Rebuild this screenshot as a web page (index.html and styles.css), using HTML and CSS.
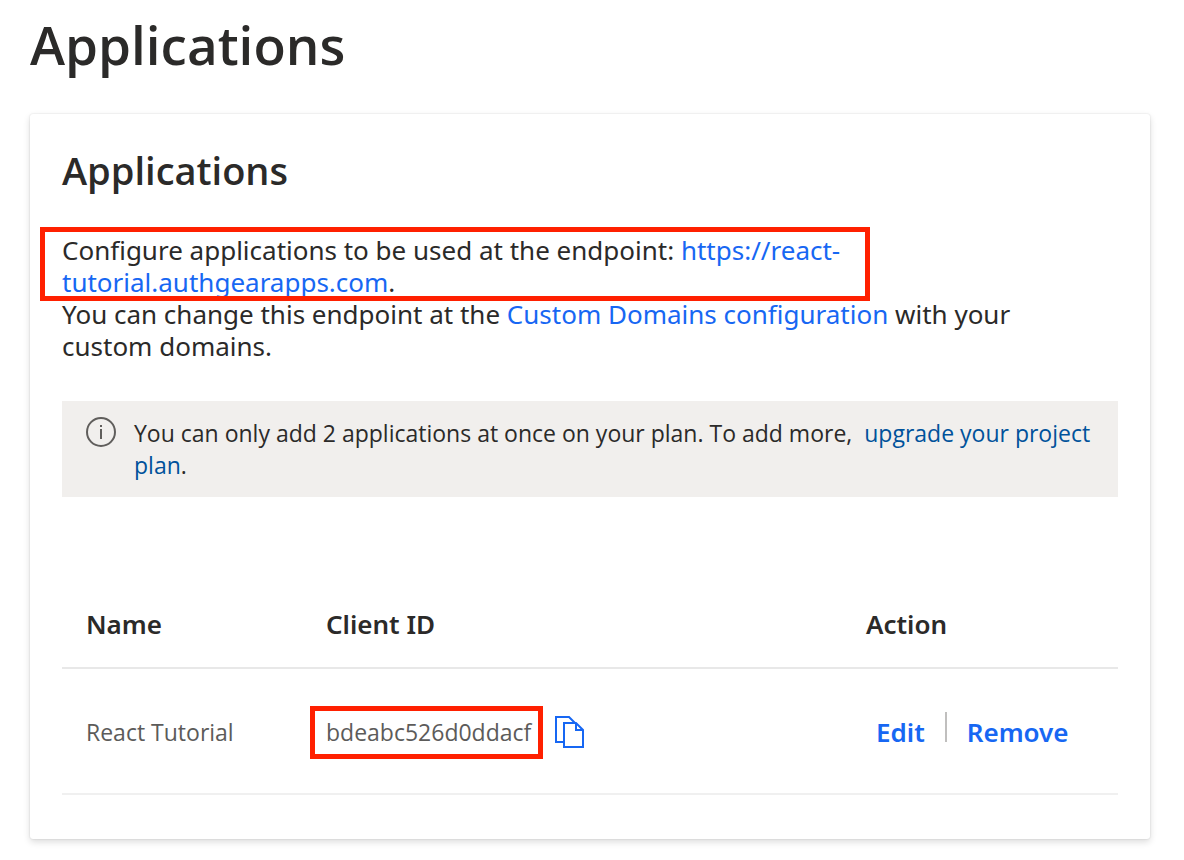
FILE: index.html
```html
<!DOCTYPE html>
<html lang="en">
<head>
<meta charset="utf-8">
<title>Applications</title>
<link rel="stylesheet" href="styles.css">
</head>
<body>
<main class="page">
  <h1 class="page-title">Applications</h1>
  <section class="card">
    <h2 class="card-title">Applications</h2>
    <p class="description"><span class="endpoint-mark">Configure applications to be used at the endpoint: <a class="link" href="#">https://react-<br>tutorial.authgearapps.com</a>.</span>You can change this endpoint at the <a class="link" href="#">Custom Domains configuration</a> with your<br>custom domains.</p>
    <div class="notice">
      <svg class="notice-icon" viewBox="0 0 32 32" aria-hidden="true"><circle cx="15" cy="15" r="14"/><path d="M15 12v10M15 8v2"/></svg>
      <p class="notice-text">You can only add 2 applications at once on your plan. To add more, <a class="notice-link" href="#">upgrade your project plan</a>.</p>
    </div>
    <table class="apps">
      <thead><tr><th class="col-name">Name</th><th class="col-id">Client ID</th><th class="col-action">Action</th></tr></thead>
      <tbody><tr>
        <td>React Tutorial</td>
        <td><div class="client"><span class="client-id">bdeabc526d0ddacf</span><button class="copy" type="button" aria-label="Copy client ID"><svg viewBox="0 0 30 34" aria-hidden="true"><path d="M9 27H1V2h13l6 6M9 8h12l7 7v17H9zM21 8v7h7"/></svg></button></div></td>
        <td><div class="actions"><button class="action" type="button">Edit</button><span class="divider"></span><button class="action" type="button">Remove</button></div></td>
      </tr></tbody>
    </table>
  </section>
</main>
</body>
</html>
```
FILE: styles.css
```css
* { box-sizing: border-box; }
body { margin: 0; background: #fff; color: #2b2a29; font-family: "Open Sans", "Noto Sans", sans-serif; }
.page { padding: 10px 34px 20px 30px; }
.page-title { margin: 0 0 34px; font-size: 53px; line-height: 70px; font-weight: 600; }
.card { padding: 32px 32px 44px; border-radius: 3px; box-shadow: 0 3px 7px rgba(0,0,0,.14), 0 0 2px rgba(0,0,0,.14); }
.card-title { margin: 0 0 33px; font-size: 38px; line-height: 48px; font-weight: 600; }
.description { margin: 0; font-family: "Noto Sans", sans-serif; font-size: 26px; line-height: 32px; }
.endpoint-mark { display: block; max-width: 830px; margin: 0 0 -3px -22px; padding: 7px 0 3px 22px; outline: 5px solid #ff2000; outline-offset: -5px; }
.link { color: #1767f3; text-decoration: none; }
.notice { display: flex; gap: 16px; margin-top: 39px; padding: 16px 24px; background: #f1efed; }
.notice-icon { flex: none; width: 32px; height: 32px; fill: none; stroke: #605e5c; stroke-width: 2; }
.notice-text { margin: 0; font-size: 23px; line-height: 32px; }
.notice-link { color: #00529b; text-decoration: none; margin-left: 6px; }
.apps { width: 100%; margin-top: 83px; border-collapse: collapse; table-layout: fixed; text-align: left; }
.apps th { height: 88px; padding: 0 24px; font-family: "Noto Sans", sans-serif; font-size: 26px; font-weight: 600; border-bottom: 2px solid #e8e8e8; }
.apps td { height: 126px; padding: 2px 24px 0; font-size: 23px; color: #5c5b5a; border-bottom: 2px solid #f0f0f0; }
.col-name { width: 240px; }
.col-id { width: 540px; }
.client { display: flex; align-items: center; gap: 12px; margin-left: -16px; }
.client-id { padding: 5px 7px 6px 11px; border: 5px solid #ff2000; line-height: 32px; }
.copy, .action { padding: 0; border: 0; background: none; font: inherit; cursor: pointer; }
.copy svg { display: block; width: 30px; height: 34px; fill: none; stroke: #1767f3; stroke-width: 2; }
.actions { display: flex; align-items: center; gap: 20px; padding-left: 10px; }
.action { color: #1767f3; font-family: "Noto Sans", sans-serif; font-size: 26px; font-weight: 600; }
.divider { width: 2px; height: 30px; margin-bottom: 10px; background: #c0bfbe; }
```
